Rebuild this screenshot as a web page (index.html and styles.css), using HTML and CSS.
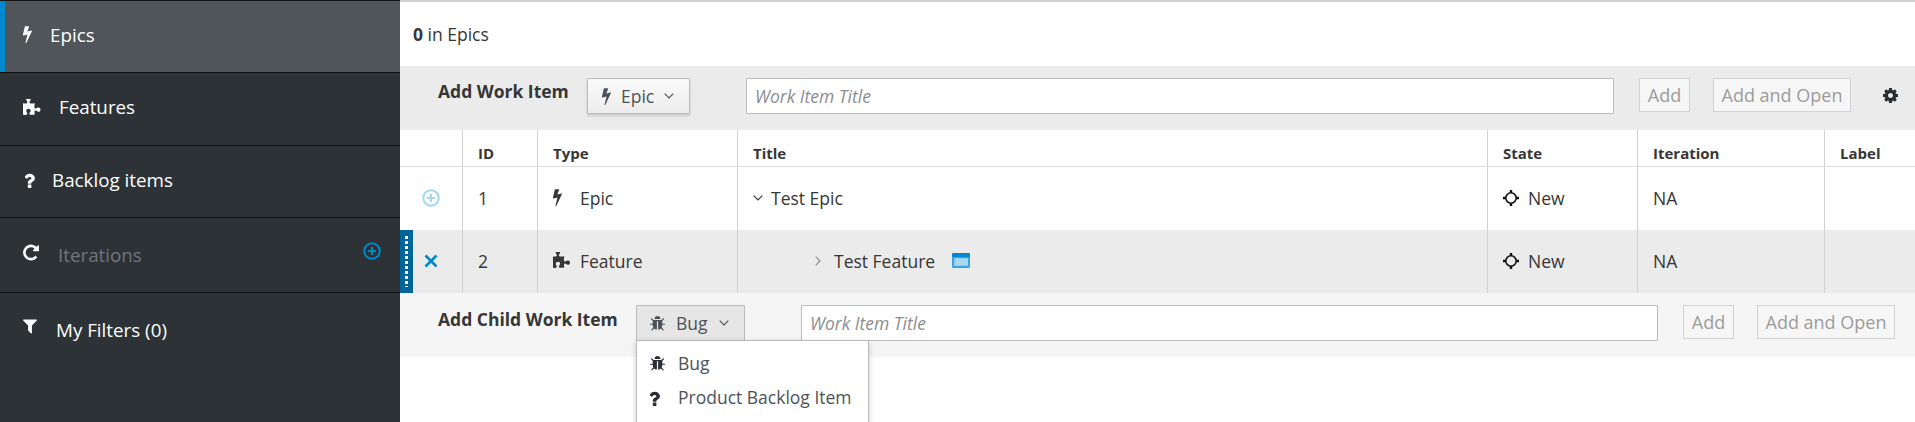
FILE: index.html
```html
<!DOCTYPE html>
<html lang="en">

<head>
    <meta charset="UTF-8">
    <meta name="viewport" content="width=device-width, initial-scale=1.0">
    <title>Backlog</title>
    <link rel="stylesheet" href="styles.css">
</head>

<body>
    <svg class="defs" aria-hidden="true">
        <symbol id="i-bolt" viewBox="470 100 880 1680"><path d="M1333 566q18 20 7 44l-540 1157q-13 25-42 25-4 0-14-2-17-5-25.5-19t-4.5-30l197-808-406 101q-4 1-12 1-18 0-31-11-18-15-13-39l201-825q4-14 16-23t28-9h328q19 0 32 12.5t13 29.5q0 8-5 18l-171 463 396-98q8-2 12-2 19 0 34 15z"/></symbol>
        <symbol id="i-puzzle" viewBox="130 130 1540 1540"><path d="M1664 1098q0 81-44.5 135t-123.5 54q-41 0-77.5-17.5t-59-38-56.5-38-71-17.5q-110 0-110 124 0 39 16 115t15 115v5q-22 0-33 1-34 3-97.5 11.5t-115.5 13.5-98 5q-61 0-103-26.5t-42-83.5q0-37 17.5-71t38-56.5 38-59 17.5-77.5q0-79-54-123.5t-135-44.5q-84 0-143 45.5t-59 127.5q0 43 15 83t33.5 64.5 33.5 53 15 50.5q0 45-46 89-37 35-117 35-95 0-245-24-9-2-27.5-4t-27.5-4l-13-2q-1 0-3-1-2 0-2-1v-1024q2 1 17.5 3.5t34 5 21.5 3.5q150 24 245 24 80 0 117-35 46-44 46-89 0-22-15-50.5t-33.5-53-33.5-64.5-15-83q0-82 59-127.5t144-45.5q80 0 134 44.5t54 123.5q0 41-17.5 77.5t-38 59-38 56.5-17.5 71q0 57 42 83.5t103 26.5q64 0 180-15t163-17v2q-1 2-3.5 17.5t-5 34-3.5 21.5q-24 150-24 245 0 80 35 117 44 46 89 46 22 0 50.5-15t53-33.5 64.5-33.5 83-15q82 0 127.5 59t45.5 143z"/></symbol>
        <symbol id="i-question" viewBox="450 130 900 1530"><path d="M1024 1376v240q0 16-12 28t-28 12h-240q-16 0-28-12t-12-28v-240q0-16 12-28t28-12h240q16 0 28 12t12 28zm316-600q0 54-15.5 101t-35 76.5-55 59.5-57.5 43.5-61 35.5q-41 23-68.5 65t-27.5 67q0 17-12 32.5t-28 15.5h-240q-15 0-25.5-18.5t-10.5-37.5v-45q0-83 65-156.5t143-108.5q59-27 84-56t25-76q0-42-46.5-74t-107.5-32q-65 0-108 29-35 25-107 115-13 16-31 16-12 0-25-8l-164-125q-13-10-15.5-25t5.5-28q160-266 464-266 80 0 161 31t146 83 106 127.5 41 158.5z"/></symbol>
        <symbol id="i-refresh" viewBox="120 120 1550 1550"><path d="M1664 256v448q0 26-19 45t-45 19h-448q-42 0-59-40-17-39 14-69l138-138q-148-137-349-137-104 0-198.5 40.5t-163.5 109.5-109.5 163.5-40.5 198.5 40.5 198.5 109.5 163.5 163.5 109.5 198.5 40.5q119 0 225-52t179-147q7-10 23-12 15 0 25 9l137 138q9 8 9.5 20.5t-7.5 22.5q-109 132-264 204.5t-327 72.5q-156 0-298-61t-245-164-164-245-61-298 61-298 164-245 245-164 298-61q147 0 284.5 55.5t244.5 156.5l130-129q29-31 70-14 39 17 39 59z"/></symbol>
        <symbol id="i-filter" viewBox="190 250 1410 1420"><path d="M1595 295q17 41-14 70l-493 493v742q0 42-39 59-13 5-25 5-27 0-45-19l-256-256q-19-19-19-45v-486l-493-493q-31-29-14-70 17-39 59-39h1280q42 0 59 39z"/></symbol>
        <symbol id="i-bug" viewBox="90 60 1610 1640"><path d="M1696 960q0 26-19 45t-45 19h-224q0 171-67 290l208 209q19 19 19 45t-19 45q-18 19-45 19t-45-19l-198-197q-5 5-15 13t-42 28.5-65 36.5-82 29-97 13v-896h-128v896q-51 0-101.5-13.5t-87-33-66-39-43.5-32.5l-15-14-183 207q-20 21-48 21-24 0-43-16-19-18-20.5-44.5t15.5-46.5l202-227q-58-114-58-274h-224q-26 0-45-19t-19-45 19-45 45-19h224v-294l-173-173q-19-19-19-45t19-45 45-19 45 19l173 173h844l173-173q19-19 45-19t45 19 19 45-19 45l-173 173v294h224q26 0 45 19t19 45zm-480-576h-640q0-133 93.5-226.5t226.5-93.5 226.5 93.5 93.5 226.5z"/></symbol>
        <symbol id="i-cog" viewBox="128 128 1536 1536"><path d="M1152 896q0-106-75-181t-181-75-181 75-75 181 75 181 181 75 181-75 75-181zm512-109v222q0 12-8 23t-20 13l-185 28q-19 54-39 91 35 50 107 138 10 12 10 25t-9 23q-27 37-99 108t-94 71q-12 0-26-9l-138-108q-44 23-91 38-16 136-29 186-7 28-36 28h-222q-14 0-24.5-8.5t-11.5-21.5l-28-184q-49-16-90-37l-141 107q-10 9-25 9-14 0-25-11-126-114-165-168-7-10-7-23 0-12 8-23 15-21 51-66.5t54-70.5q-27-50-41-99l-183-27q-13-2-21-12.5t-8-23.5v-222q0-12 8-23t19-13l186-28q14-46 39-92-40-57-107-138-10-12-10-24 0-10 9-23 26-36 98.5-107.5t94.5-71.5q13 0 26 10l138 107q44-23 91-38 16-136 29-186 7-28 36-28h222q14 0 24.5 8.5t11.5 21.5l28 184q49 16 90 37l142-107q9-9 24-9 13 0 25 10 129 119 165 170 7 8 7 22 0 12-8 23-15 21-51 66.5t-54 70.5q26 50 41 98l183 28q13 2 21 12.5t8 23.5z"/></symbol>
        <symbol id="i-state" viewBox="0 0 16 16"><path d="M6.8 0h2.4v3H6.8zM6.8 13h2.4v3H6.8zM0 6.8h3v2.4H0zM13 6.8h3v2.4h-3z"/><circle cx="8" cy="8" r="5.2" fill="none" stroke="currentColor" stroke-width="1.6"/></symbol>
        <symbol id="i-plus" viewBox="0 0 18 18"><circle cx="9" cy="9" r="7.7" fill="none" stroke="currentColor" stroke-width="2"/><path d="M8 5h2v3h3v2h-3v3H8v-3H5V8h3z"/></symbol>
        <symbol id="i-close" viewBox="0 0 14 14"><path d="M1.5 1.5 12.5 12.5M12.5 1.5 1.5 12.5" fill="none" stroke="currentColor" stroke-width="2.6"/></symbol>
        <symbol id="i-down" viewBox="0 0 10 6"><path d="M.7.7 5 5 9.3.7" fill="none" stroke="currentColor" stroke-width="1.2"/></symbol>
        <symbol id="i-right" viewBox="0 0 6 10"><path d="M.7.7 5 5 .7 9.3" fill="none" stroke="currentColor" stroke-width="1.2"/></symbol>
        <symbol id="i-detail" viewBox="0 0 18 15"><rect width="18" height="15" rx="1.5" fill="#39a5dc"/><rect width="18" height="4" rx="1" fill="#0088ce"/><path d="M2 5h14v8H2z" fill="#8ccbea"/><path d="M5 5v8M6 7h10M6 9h10M6 11h10" stroke="#d6ecf7" stroke-width=".8" fill="none"/></symbol>
    </svg>

    <div class="page">
        <nav class="sidebar">
            <a class="side-item active"><svg class="ic w9"><use href="#i-bolt"/></svg>Epics</a>
            <a class="side-item"><svg class="ic w18"><use href="#i-puzzle"/></svg>Features</a>
            <a class="side-item side-question"><svg class="ic w10"><use href="#i-question"/></svg>Backlog items</a>
            <a class="side-item side-tall muted"><svg class="ic w16"><use href="#i-refresh"/></svg><span class="side-label">Iterations</span><svg class="side-add"><use href="#i-plus"/></svg></a>
            <a class="side-item side-last"><svg class="ic w14"><use href="#i-filter"/></svg>My Filters (0)</a>
        </nav>

        <main class="content">
            <div class="count"><b>0</b> in Epics</div>

            <div class="quick-add">
                <label class="qa-label">Add Work Item</label>
                <button class="type-btn"><svg class="ic w9"><use href="#i-bolt"/></svg>Epic<svg class="caret"><use href="#i-down"/></svg></button>
                <div class="title-input">Work Item Title</div>
                <button class="add-btn">Add</button>
                <button class="add-btn open-btn">Add and Open</button>
                <svg class="cog"><use href="#i-cog"/></svg>
            </div>

            <div class="row head">
                <div class="cell"></div>
                <div class="cell">ID</div>
                <div class="cell">Type</div>
                <div class="cell">Title</div>
                <div class="cell">State</div>
                <div class="cell">Iteration</div>
                <div class="cell">Label</div>
            </div>

            <div class="row item">
                <div class="cell toggle"><svg class="plus"><use href="#i-plus"/></svg></div>
                <div class="cell">1</div>
                <div class="cell"><svg class="ic w9 type-ic"><use href="#i-bolt"/></svg>Epic</div>
                <div class="cell"><svg class="tree"><use href="#i-down"/></svg>Test Epic</div>
                <div class="cell"><svg class="state"><use href="#i-state"/></svg>New</div>
                <div class="cell">NA</div>
                <div class="cell"></div>
            </div>

            <div class="row item selected">
                <div class="handle"></div>
                <div class="cell toggle"><svg class="close"><use href="#i-close"/></svg></div>
                <div class="cell">2</div>
                <div class="cell"><svg class="ic w17 type-ic"><use href="#i-puzzle"/></svg>Feature</div>
                <div class="cell child"><svg class="tree-right"><use href="#i-right"/></svg>Test Feature<svg class="detail"><use href="#i-detail"/></svg></div>
                <div class="cell"><svg class="state"><use href="#i-state"/></svg>New</div>
                <div class="cell">NA</div>
                <div class="cell"></div>
            </div>

            <div class="quick-add child-add">
                <label class="qa-label">Add Child Work Item</label>
                <div class="type-wrap">
                    <button class="type-btn open"><svg class="ic w15"><use href="#i-bug"/></svg>Bug<svg class="caret"><use href="#i-down"/></svg></button>
                    <ul class="menu">
                        <li><span class="menu-ic"><svg class="ic w15"><use href="#i-bug"/></svg></span>Bug</li>
                        <li><span class="menu-ic"><svg class="ic w10"><use href="#i-question"/></svg></span>Product Backlog Item</li>
                    </ul>
                </div>
                <div class="title-input">Work Item Title</div>
                <button class="add-btn">Add</button>
                <button class="add-btn open-btn">Add and Open</button>
            </div>
        </main>
    </div>
</body>

</html>
```

FILE: styles.css
```css
* {
    box-sizing: border-box;
}

html,
body {
    margin: 0;
    padding: 0;
    height: 100%;
    overflow: hidden;
}

body {
    font-family: "Open Sans", "Noto Sans", sans-serif;
    font-size: 17.5px;
    color: #363636;
    background-color: #fff;
}

.defs {
    display: none;
}

svg {
    fill: currentColor;
    flex: none;
}

.page {
    display: flex;
    height: 422px;
}

/* sidebar */
.sidebar {
    width: 400px;
    flex: none;
    background-color: #2d3236;
    border-top: 1px solid #111;
    color: #fff;
    font-size: 18.8px;
}

.side-item {
    display: flex;
    align-items: center;
    gap: 18px;
    height: 72px;
    padding: 0 20px 4px 23px;
    border-bottom: 1px solid #0d0f10;
}

.side-item.active {
    background-color: #50555a;
    box-shadow: inset 5px 0 0 #0088ce;
}

.side-item + .side-item {
    height: 73px;
}

.side-item.side-question {
    height: 72px;
    padding-left: 25px;
    gap: 17px;
}

.side-item.side-tall {
    height: 75px;
    gap: 19px;
    padding-bottom: 0;
}

.muted .side-label {
    color: #72767a;
}

.side-add {
    width: 18px;
    height: 18px;
    margin-left: auto;
    margin-right: -1px;
    margin-top: -8px;
    color: #0088ce;
}

.muted .ic {
    margin-top: -6px;
}

.side-item.side-last {
    gap: 19px;
    border-bottom: none;
    padding-bottom: 0;
}

.side-last .ic {
    margin-top: -6px;
}

.ic {
    height: 17px;
}

.w9 {
    width: 9px;
}

.w10 {
    width: 10px;
}

.w14 {
    width: 14px;
}

.w15 {
    width: 15px;
}

.w16 {
    width: 16px;
}

.w17 {
    width: 17px;
}

.w18 {
    width: 18px;
}

/* main area */
.content {
    flex: 1;
    min-width: 0;
    border-top: 2px solid #d1d1d1;
}

.count {
    height: 64px;
    padding: 0 0 0 13px;
    display: flex;
    align-items: center;
    white-space: pre;
}

.quick-add {
    display: flex;
    align-items: flex-start;
    height: 64px;
    padding: 12px 17px 0 38px;
    background-color: #ebebeb;
}

.qa-label {
    flex: none;
    width: 149px;
    font-weight: 700;
    line-height: 26px;
    white-space: nowrap;
}

.type-btn {
    display: flex;
    align-items: center;
    gap: 10px;
    width: 103px;
    height: 36px;
    padding: 0 0 0 14px;
    border: 1px solid #bbb;
    border-radius: 1px;
    background: linear-gradient(#fafafa, #ededed);
    box-shadow: 0 2px 3px rgba(3, 3, 3, 0.15);
    font: inherit;
    color: #4d5258;
    flex: none;
}

.type-btn .caret {
    width: 10px;
    height: 6px;
}

.title-input {
    flex: none;
    width: 868px;
    height: 36px;
    margin: 0 25px 0 56px;
    padding: 0 8px;
    line-height: 34px;
    background-color: #fff;
    border: 1px solid #bbb;
    border-radius: 1px;
    color: #8b8d8f;
    font-style: italic;
}

.add-btn {
    flex: none;
    height: 34px;
    width: 51px;
    padding: 0;
    margin-right: 23px;
    background-color: #f6f6f6;
    border: 1px solid #d1d1d1;
    font: inherit;
    font-size: 18px;
    color: #9c9c9c;
}

.open-btn {
    width: 138px;
    margin-right: 32px;
}

.cog {
    width: 15px;
    height: 15px;
    margin-top: 10px;
    color: #292e34;
}

/* table */
.row {
    display: grid;
    grid-template-columns: 63px 75px 200px 750px 150px 187px 1fr;
    position: relative;
}

.cell {
    display: flex;
    align-items: center;
    padding-left: 15px;
    border-right: 1px solid #d1d1d1;
    min-width: 0;
    padding-bottom: 2px;
}

.cell:last-child {
    border-right: none;
}

.head {
    height: 37px;
    border-bottom: 1px solid #dedede;
    font-size: 15px;
    font-weight: 700;
}

.head .cell {
    padding-top: 10px;
    padding-bottom: 0;
}

.item {
    height: 63px;
}

.selected {
    background-color: #ebebeb;
}

.toggle {
    justify-content: center;
    padding-left: 0;
}

.plus {
    width: 18px;
    height: 18px;
    color: #a3d7f0;
}

.close {
    width: 14px;
    height: 14px;
    color: #0088ce;
}

.handle {
    position: absolute;
    left: 0;
    top: 0;
    bottom: 0;
    width: 13px;
    background-color: #00659c;
}

.handle::after {
    content: "";
    position: absolute;
    left: 5px;
    top: 6px;
    bottom: 6px;
    width: 3px;
    background: repeating-linear-gradient(#fff 0 3px, transparent 3px 5px);
}

.type-ic {
    margin-right: 18px;
}

.type-ic.w17 {
    margin-right: 10px;
}

.tree {
    width: 10px;
    height: 6px;
    margin-right: 8px;
}

.tree-right {
    width: 6px;
    height: 10px;
    margin: 0 13px 0 0;
    color: #8b8d8f;
}

.child {
    padding-left: 77px;
}

.detail {
    width: 18px;
    height: 15px;
    margin-left: 17px;
}

.state {
    width: 16px;
    height: 16px;
    margin-right: 9px;
    color: #111;
}

/* child quick add */
.child-add {
    background-color: #f5f5f5;
    padding-top: 12px;
    padding-right: 0;
}

.child-add .qa-label {
    width: 198px;
    margin-top: 1px;
}

.type-wrap {
    position: relative;
    flex: none;
}

.type-btn.open {
    width: 109px;
    background: #e6e6e6;
    box-shadow: none;
    gap: 11px;
    padding-left: 13px;
}

.child-add .title-input {
    width: 857px;
    margin-left: 56px;
}

.child-add .open-btn {
    margin-right: 0;
}

.menu {
    position: absolute;
    top: 35px;
    left: 0;
    width: 233px;
    height: 90px;
    margin: 0;
    padding: 5px 0 0;
    list-style: none;
    background-color: #fff;
    border: 1px solid #bbb;
    box-shadow: 0 2px 6px rgba(3, 3, 3, 0.2);
    z-index: 2;
    color: #4d5258;
}

.menu li {
    display: flex;
    align-items: center;
    height: 34px;
    padding-left: 13px;
}

.menu-ic {
    width: 28px;
    flex: none;
    display: flex;
    color: #292e34;
}
```
